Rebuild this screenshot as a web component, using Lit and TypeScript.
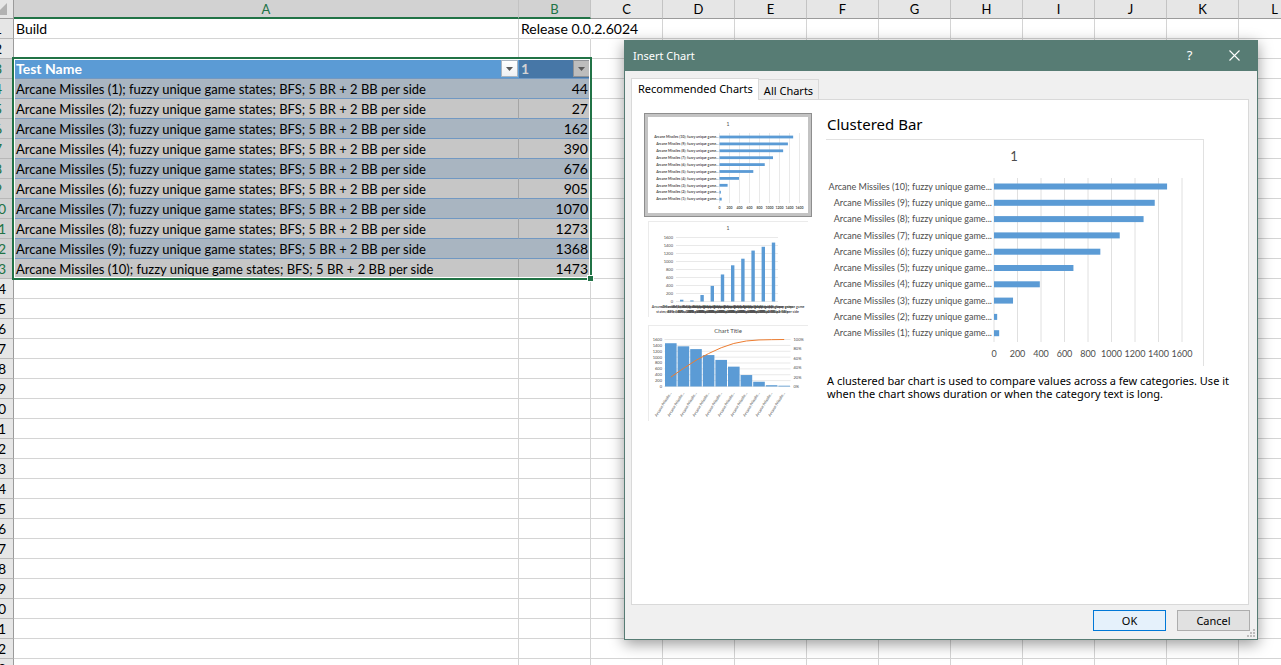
import { LitElement, html, svg, css, nothing } from "lit";
import { customElement, property, state } from "lit/decorators.js";

const VALUES = [44, 27, 162, 390, 676, 905, 1070, 1273, 1368, 1473];
const COLUMNS = ["A", "B", "C", "D", "E", "F", "G", "H", "I", "J", "K", "L"];
const ROW_COUNT = 33;
const FIRST_DATA_ROW = 4;
const TICKS = [0, 200, 400, 600, 800, 1000, 1200, 1400, 1600];
const AXIS_MAX = 1600;

const testName = (i: number) =>
  `Arcane Missiles (${i + 1}); fuzzy unique game states; BFS; 5 BR + 2 BB per side`;
const shortName = (i: number) => `Arcane Missiles (${i + 1}); fuzzy unique game...`;

const chartStyles = css`
  :host { display: block; }
  svg { display: block; width: 100%; height: auto; font-family: "Lato", sans-serif; }
  .bar { fill: #5b9bd5; }
  .grid { stroke: #e0e0e0; stroke-width: 1; }
  .grid.thin { stroke: #e9e9e9; }
  .grid.double { stroke: #e9e9e9; stroke-width: 2; }
  .label { fill: #4d4d4d; }
  .strong { font-weight: 700; }
  .end { text-anchor: end; }
  .mid { text-anchor: middle; }
  .line { fill: none; stroke: #ed7d31; stroke-width: 1; }
`;

@customElement("bar-chart")
class BarChart extends LitElement {
  @property({ type: Boolean }) compact = false;
  static styles = chartStyles;

  render() {
    const g = this.compact
      ? { w: 320, h: 192, x0: 143, x1: 303, top: 32, bottom: 172, first: 40, pitch: 13.8, bar: 5.6, size: 7, title: 10, titleX: 160, titleY: 18, axisY: 182 }
      : { w: 377, h: 226, x0: 168, x1: 356, top: 38, bottom: 202, first: 46.5, pitch: 16.3, bar: 6, size: 9, title: 13, titleX: 188, titleY: 21, axisY: 215 };
    const scale = (g.x1 - g.x0) / AXIS_MAX;
    const n = VALUES.length;
    const weight = this.compact ? "strong" : "";
    return html`<svg viewBox="0 0 ${g.w} ${g.h}" role="img" aria-label="Clustered bar chart">
      <text class="label mid" x=${g.titleX} y=${g.titleY} font-size=${g.title}>1</text>
      ${TICKS.map((t) => svg`
        <line class="grid ${this.compact ? "double" : ""}" x1=${g.x0 + t * scale} x2=${g.x0 + t * scale} y1=${g.top} y2=${g.bottom}></line>
        <text class="label mid ${weight}" x=${g.x0 + t * scale} y=${g.axisY + g.size * 0.2} font-size=${g.size}>${t}</text>`)}
      ${VALUES.map((v, i) => {
        const y = g.first + (n - 1 - i) * g.pitch;
        return svg`
          <rect class="bar" x=${g.x0} y=${y - g.bar / 2} width=${v * scale} height=${g.bar}></rect>
          <text class="label end ${weight}" x=${g.x0 - 2} y=${y + g.size * 0.35} font-size=${g.size}>${shortName(i)}</text>`;
      })}
    </svg>`;
  }
}

@customElement("column-chart")
class ColumnChart extends LitElement {
  static styles = chartStyles;

  render() {
    const bottom = 161;
    const scale = 128 / AXIS_MAX;
    return html`<svg viewBox="0 0 320 192" role="img" aria-label="Clustered column chart">
      <text class="label mid" x="160" y="18" font-size="10">1</text>
      ${TICKS.map((t) => svg`
        <line class="grid double" x1="56" x2="260" y1=${bottom - t * scale} y2=${bottom - t * scale}></line>
        <text class="label end" x="50" y=${bottom - t * scale + 2} font-size="8">${t}</text>`)}
      ${VALUES.map((v, i) => {
        const x = 67.4 + i * 20.4;
        return svg`
          <rect class="bar" x=${x - 3.4} y=${bottom - v * scale} width="6.8" height=${v * scale}></rect>
          <text class="label mid strong" x=${x} y="174" font-size="7">Arcane Missiles (${i + 1}); fuzzy unique game</text>
          <text class="label mid strong" x=${x} y="184" font-size="7">states; BFS; 5 BR + 2 BB per side</text>`;
      })}
    </svg>`;
  }
}

@customElement("pareto-chart")
class ParetoChart extends LitElement {
  static styles = chartStyles;

  render() {
    const sorted = [...VALUES].sort((a, b) => b - a);
    const total = sorted.reduce((a, b) => a + b, 0);
    const bottom = 61.5;
    const height = 47;
    const centre = (i: number) => 22.8 + i * 12.6;
    let sum = 0;
    const points = sorted.map((v, i) => {
      sum += v;
      return `${centre(i)},${bottom - (sum / total) * height}`;
    });
    return html`<svg viewBox="0 0 160 96" role="img" aria-label="Pareto chart">
      <text class="label mid" x="80" y="8" font-size="6">Chart Title</text>
      ${TICKS.map((t) => {
        const y = bottom - (t / AXIS_MAX) * height;
        return svg`
          <line class="grid thin" x1="16.5" x2="142.5" y1=${y} y2=${y}></line>
          <text class="label end" x="14" y=${y + 1.4} font-size="4">${t}</text>`;
      })}
      ${[0, 20, 40, 60, 80, 100].map((p) => svg`
        <text class="label" x="145.5" y=${bottom - (p / 100) * height + 1.4} font-size="4">${p}%</text>`)}
      ${sorted.map((v, i) => svg`
        <rect class="bar" x=${centre(i) - 5.8} y=${bottom - (v / AXIS_MAX) * height} width="11.6" height=${(v / AXIS_MAX) * height}></rect>
        <text class="label end" font-size="4" transform="translate(${centre(i) + 1} 68) rotate(-58)">Arcane Missile...</text>`)}
      <polyline class="line" points=${points.join(" ")}></polyline>
    </svg>`;
  }
}

@customElement("sheet-grid")
class SheetGrid extends LitElement {
  static styles = css`
    :host { display: block; position: relative; color: #000; font: 14px/18px "Lato", sans-serif; }
    table { border-collapse: separate; border-spacing: 0; table-layout: fixed; width: 1328px; margin-left: -17px; }
    .c-row { width: 31px; }
    .c-name { width: 505px; }
    .c-cell { width: 72px; }
    th, td { box-sizing: border-box; height: 20px; padding: 1px 2px 0; white-space: nowrap; text-align: left; font-weight: 400; border-right: 1px solid #d4d4d4; border-bottom: 1px solid #d4d4d4; }
    thead th { height: 19px; font-size: 13px; line-height: 16px; padding: 0; text-align: center; background: #e6e6e6; border-right-color: #c3c3c3; border-bottom-color: #9b9b9b; }
    thead .picked { background: #d2d2d2; color: #217346; border-bottom: 2px solid #217346; }
    thead .corner { border-right-color: #9b9b9b; }
    .corner svg { display: block; width: 13px; height: 13px; margin-left: 14px; }
    tbody th { padding: 1px 0 0; text-align: center; background: #e6e6e6; border-right-color: #9b9b9b; border-bottom-color: #b8b8b8; }
    tbody .picked { background: #d2d2d2; color: #217346; }
    .spill { overflow: visible; border-right-color: transparent; }
    .head .name, .head .num { padding: 0 2px; background: #5b9bd5; color: #fff; font-weight: 700; border-color: #5b9bd5; border-bottom-color: #7198c2; }
    .head .num { background: #4777a7; color: #d3d3d3; border-right-color: #4777a7; }
    .field { display: flex; align-items: center; justify-content: space-between; height: 19px; }
    .filter { box-sizing: border-box; width: 17px; height: 17px; margin-right: -2px; padding: 0; border: 1px solid #a9b4c0; background: linear-gradient(#fff, #eef0f3); }
    .filter svg { display: block; margin: 0 auto; }
    .num .filter { background: #bdbdbd; border-color: #8f9297; }
    .data .name, .data .num { background: #c6c6c6; border-right-color: #a5a5a5; border-bottom-color: #7198c2; }
    .data .name { font-size: 13px; }
    .data.band .name, .data.band .num { background: #a9b5c1; border-right-color: #a9b5c1; }
    .data .num { text-align: right; }
    .selection { position: absolute; left: 12px; top: 57px; width: 580px; height: 223px; box-sizing: border-box; border: 2px solid #217346; box-shadow: inset 0 0 0 1px #fff; pointer-events: none; }
    .handle { position: absolute; right: -4px; bottom: -4px; width: 5px; height: 5px; background: #217346; border: 1px solid #fff; }
  `;

  private blanks(from: number) {
    return COLUMNS.slice(from).map(() => html`<td></td>`);
  }

  private filterButton(name: string) {
    return html`<button class="filter" aria-label="Filter ${name}">
      <svg width="7" height="4" viewBox="0 0 7 4"><path d="M0 0H7L3.5 4Z" fill="#5a5a5a"></path></svg>
    </button>`;
  }

  private tableRow(row: number) {
    const i = row - FIRST_DATA_ROW;
    if (row === 1) {
      return html`<tr>
        <th scope="row">1</th>
        <td>Build</td><td class="spill">Release 0.0.2.6024</td>${this.blanks(2)}
      </tr>`;
    }
    if (row === 3) {
      return html`<tr class="head">
        <th class="picked" scope="row">3</th>
        <td class="name"><div class="field">Test Name ${this.filterButton("Test Name")}</div></td>
        <td class="num"><div class="field">1 ${this.filterButton("1")}</div></td>
        ${this.blanks(2)}
      </tr>`;
    }
    if (i >= 0 && i < VALUES.length) {
      return html`<tr class="data ${i % 2 ? "" : "band"}">
        <th class="picked" scope="row">${row}</th>
        <td class="name">${testName(i)}</td><td class="num">${VALUES[i]}</td>
        ${this.blanks(2)}
      </tr>`;
    }
    return html`<tr><th scope="row">${row}</th>${this.blanks(0)}</tr>`;
  }

  render() {
    const rows = Array.from({ length: ROW_COUNT }, (_, k) => k + 1);
    return html`
      <table>
        <colgroup>
          <col class="c-row"><col class="c-name">${COLUMNS.slice(1).map(() => html`<col class="c-cell">`)}
        </colgroup>
        <thead><tr>
          <th class="corner"><svg viewBox="0 0 13 13"><path d="M10 0V12H-2Z" fill="#b2b2b2"></path></svg></th>
          ${COLUMNS.map((c, i) => html`<th scope="col" class=${i < 2 ? "picked" : nothing}>${c}</th>`)}
        </tr></thead>
        <tbody>${rows.map((row) => this.tableRow(row))}</tbody>
      </table>
      <div class="selection"><div class="handle"></div></div>`;
  }
}

@customElement("insert-chart-dialog")
class InsertChartDialog extends LitElement {
  @state() private chosen = 0;

  static styles = css`
    :host { display: flex; flex-direction: column; box-sizing: border-box; border: 1px solid #577c74; background: #f0f0f0; color: #000; font: 11px/13px "Noto Sans", sans-serif; box-shadow: 0 4px 14px rgba(0, 0, 0, 0.4); }
    button { font: inherit; color: inherit; padding: 0; margin: 0; }
    .title { display: flex; align-items: center; box-sizing: border-box; height: 30px; padding: 0 0 2px 8px; background: #577c74; color: #fff; }
    .title h1 { flex: 1; margin: 0; font: inherit; }
    .title button { width: 45px; height: 28px; border: 0; background: none; font-size: 13px; }
    .title svg { display: block; margin: auto; }
    .tabs { display: flex; align-items: flex-end; margin: 7px 0 0 6px; position: relative; }
    .tab { box-sizing: border-box; height: 20px; padding: 2px 5px 0; border: 1px solid #d9d9d9; border-bottom: 0; border-left: 0; background: #f0f0f0; }
    .tab.on { height: 22px; margin-bottom: -1px; border-left: 1px solid #d9d9d9; background: #fff; padding: 0 5px 2px 6px; }
    .panel { flex: 1; display: flex; margin: 0 8px 0 6px; border: 1px solid #d9d9d9; background: #fff; }
    .list { display: flex; flex-direction: column; padding: 13px 0 0 12px; }
    .thumb { box-sizing: border-box; width: 168px; height: 104px; padding: 3px; border: 1px solid transparent; background: none; text-align: left; }
    .thumb.on { border-color: #8e8e8e; background: #c3c3c3; }
    .thumb > * { background: #fff; }
    .thumb:not(.on) > * { box-shadow: inset 1px 1px #ebebeb; }
    .detail { flex: 1; padding: 13px 44px 0 14px; min-width: 0; }
    .detail h2 { margin: 0; padding: 0 1px 3px; font: 15px/23px "Noto Sans", sans-serif; }
    .preview { border: 1px solid #e1e1e1; border-left: 0; border-bottom: 0; }
    .detail p { margin: 8px -30px 0 1px; }
    .foot { display: flex; justify-content: flex-end; gap: 11px; padding: 5px 7px 8px 0; }
    .foot button { box-sizing: border-box; width: 73px; height: 21px; border: 1px solid #adadad; background: #e1e1e1; }
    .foot .ok { border-color: #0078d7; background: #e5f1fb; }
    .grip { position: absolute; right: 2px; bottom: 2px; }
  `;

  private thumb(i: number, label: string, chart: unknown) {
    return html`<button class="thumb ${this.chosen === i ? "on" : ""}" aria-label=${label} aria-pressed=${this.chosen === i}
      @click=${() => (this.chosen = i)}>${chart}</button>`;
  }

  render() {
    return html`
      <header class="title">
        <h1>Insert Chart</h1>
        <button aria-label="Help">?</button>
        <button aria-label="Close"><svg width="11" height="11" viewBox="0 0 11 11"><path d="M.5 .5L10.5 10.5M10.5 .5L.5 10.5" stroke="#fff" stroke-width="1.1"></path></svg></button>
      </header>
      <div class="tabs" role="tablist">
        <button class="tab on" role="tab" aria-selected="true">Recommended Charts</button>
        <button class="tab" role="tab" aria-selected="false">All Charts</button>
      </div>
      <section class="panel" role="tabpanel">
        <div class="list">
          ${this.thumb(0, "Clustered Bar", html`<bar-chart compact></bar-chart>`)}
          ${this.thumb(1, "Clustered Column", html`<column-chart></column-chart>`)}
          ${this.thumb(2, "Pareto", html`<pareto-chart></pareto-chart>`)}
        </div>
        <div class="detail">
          <h2>Clustered Bar</h2>
          <div class="preview"><bar-chart></bar-chart></div>
          <p>A clustered bar chart is used to compare values across a few categories. Use it when the chart shows duration or when the category text is long.</p>
        </div>
      </section>
      <footer class="foot">
        <button class="ok">OK</button>
        <button>Cancel</button>
      </footer>
      <svg class="grip" width="8" height="8" viewBox="0 0 8 8"><path d="M6 0h2v2h-2zM3 3h2v2h-2zM6 3h2v2h-2zM0 6h2v2h-2zM3 6h2v2h-2zM6 6h2v2h-2z" fill="#bcbcbc"></path></svg>`;
  }
}

@customElement("app-root")
class AppRoot extends LitElement {
  static styles = css`
    :host { display: block; position: relative; height: 100vh; overflow: hidden; background: #fff; }
    .dialog { position: absolute; left: 624px; top: 40px; width: 634px; height: 600px; }
  `;

  render() {
    return html`
      <sheet-grid></sheet-grid>
      <insert-chart-dialog class="dialog" role="dialog" aria-label="Insert Chart"></insert-chart-dialog>`;
  }
}
